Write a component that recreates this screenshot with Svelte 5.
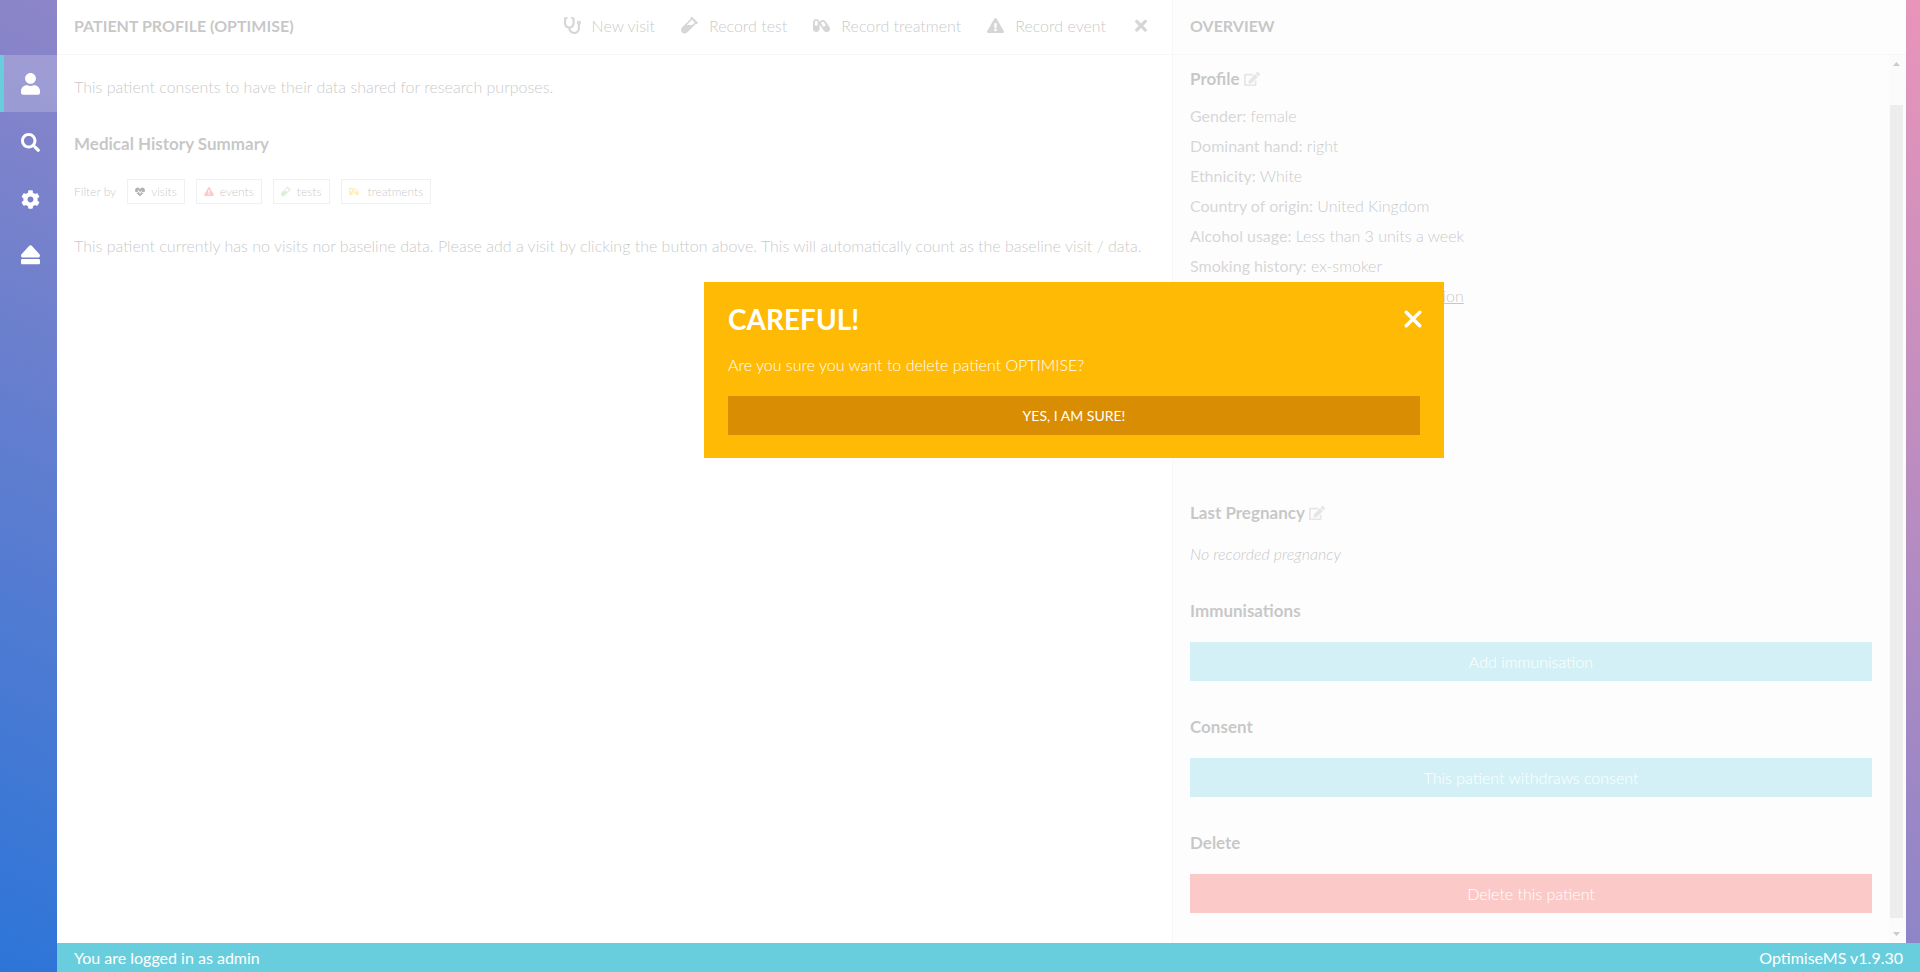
<script>
  const icons = {
    user: [448, 'M224 256c70.7 0 128-57.3 128-128S294.7 0 224 0 96 57.3 96 128s57.3 128 128 128zm89.6 32h-16.7c-22.2 10.2-46.9 16-72.9 16s-50.6-5.8-72.9-16h-16.7C60.2 288 0 348.2 0 422.4V464c0 26.5 21.5 48 48 48h352c26.5 0 48-21.5 48-48v-41.6c0-74.2-60.2-134.4-134.4-134.4z'],
    search: [512, 'M505 442.7L405.3 343c-4.5-4.5-10.6-7-17-7H372c27.6-35.3 44-79.7 44-128C416 93.1 322.9 0 208 0S0 93.1 0 208s93.1 208 208 208c48.3 0 92.7-16.4 128-44v16.3c0 6.4 2.5 12.5 7 17l99.7 99.7c9.4 9.4 24.6 9.4 33.9 0l28.3-28.3c9.4-9.4 9.4-24.6.1-34zM208 336c-70.7 0-128-57.2-128-128 0-70.7 57.2-128 128-128 70.7 0 128 57.2 128 128 0 70.7-57.2 128-128 128z'],
    cog: [512, 'M487.4 315.7l-42.6-24.6c4.3-23.2 4.3-47 0-70.2l42.6-24.6c4.9-2.8 7.1-8.6 5.5-14-11.1-35.6-30-67.8-54.7-94.6-3.8-4.1-10-5.1-14.8-2.3L380.8 110c-17.9-15.4-38.5-27.3-60.8-35.1V25.8c0-5.6-3.9-10.5-9.4-11.7-36.7-8.2-74.3-7.8-109.2 0-5.5 1.2-9.4 6.1-9.4 11.7V75c-22.2 7.9-42.8 19.8-60.8 35.1L88.7 85.5c-4.9-2.8-11-1.9-14.8 2.3-24.7 26.7-43.6 58.9-54.7 94.6-1.7 5.4.6 11.2 5.5 14L67.3 221c-4.3 23.2-4.3 47 0 70.2l-42.6 24.6c-4.9 2.8-7.1 8.6-5.5 14 11.1 35.6 30 67.8 54.7 94.6 3.8 4.1 10 5.1 14.8 2.3l42.6-24.6c17.9 15.4 38.5 27.3 60.8 35.1v49.2c0 5.6 3.9 10.5 9.4 11.7 36.7 8.2 74.3 7.8 109.2 0 5.5-1.2 9.4-6.1 9.4-11.7v-49.2c22.2-7.9 42.8-19.8 60.8-35.1l42.6 24.6c4.9 2.8 11 1.9 14.8-2.3 24.7-26.7 43.6-58.9 54.7-94.6 1.5-5.5-.7-11.3-5.6-14.1zM256 336c-44.1 0-80-35.9-80-80s35.9-80 80-80 80 35.9 80 80-35.9 80-80 80z'],
    eject: [448, 'M448 384v64c0 17.673-14.327 32-32 32H32c-17.673 0-32-14.327-32-32v-64c0-17.673 14.327-32 32-32h384c17.673 0 32 14.327 32 32zM48.053 320h351.886c41.651 0 63.581-49.674 35.383-80.435L259.383 47.558c-19.014-20.743-51.751-20.744-70.767 0L12.67 239.565C-15.475 270.268 6.324 320 48.053 320z'],
    stethoscope: [512, 'M447.1 112c-34.2.5-62.3 28.4-63 62.6-.5 24.3 12.5 45.6 32 56.8V344c0 57.3-50.2 104-112 104-60 0-109.2-44.1-111.9-99.2C265 333.8 320 269.2 320 192V36.6c0-11.4-8.1-21.3-19.3-23.5L237.8.5c-13-2.6-25.6 5.8-28.2 18.8L206.4 35c-2.6 13 5.8 25.6 18.8 28.2l30.7 6.1v121.4c0 52.9-42.2 96.7-95.1 97.2-53.4.5-96.9-42.7-96.9-96V69.4l30.7-6.1c13-2.6 21.4-15.2 18.8-28.2l-3.1-15.7C107.7 6.4 95.1-2 82.1.6L19.3 13C8.1 15.3 0 25.1 0 36.6V192c0 77.3 55.1 142 128.1 156.8C130.7 439.2 208.6 512 304 512c97 0 176-75.4 176-168V231.4c19.1-11.1 32-31.7 32-55.4 0-35.7-29.2-64.5-64.9-64zm.9 80c-8.8 0-16-7.2-16-16s7.2-16 16-16 16 7.2 16 16-7.2 16-16 16z'],
    vial: [480, 'M477.7 186.1L309.5 18.3c-3.1-3.1-8.2-3.1-11.3 0l-34 33.9c-3.1 3.1-3.1 8.2 0 11.3l11.2 11.1L33 316.5c-38.8 38.7-45.1 102-9.4 143.5 20.6 24 49.5 36 78.4 35.9 26.4 0 52.8-10 72.9-30.1l246.3-245.7 11.2 11.1c3.1 3.1 8.2 3.1 11.3 0l34-33.9c3.1-3 3.1-8.1 0-11.2zM318 256H161l148-147.7 78.5 78.3L318 256z'],
    capsules: [576, 'M555.3 300.1L424.2 112.8C401.9 81 366.4 64 330.4 64c-22.6 0-45.5 6.7-65.5 20.7-19.7 13.8-33.7 32.8-41.5 53.8C220.5 79.2 172 32 112 32 50.1 32 0 82.1 0 144v224c0 61.9 50.1 112 112 112s112-50.1 112-112V218.9c3.3 8.6 7.3 17.1 12.8 25L368 431.2c22.2 31.8 57.7 48.8 93.8 48.8 22.7 0 45.5-6.7 65.5-20.7 51.7-36.2 64.2-107.5 28-159.2zM160 256H64V144c0-26.5 21.5-48 48-48s48 21.5 48 48v112zm194.8 44.9l-65.6-93.7c-7.7-11-10.7-24.4-8.3-37.6 2.3-13.2 9.7-24.8 20.7-32.5 8.5-6 18.5-9.1 28.8-9.1 16.5 0 31.9 8 41.3 21.5l65.6 93.7-82.5 57.7z'],
    warning: [576, 'M569.517 440.013C587.975 472.007 564.806 512 527.94 512H48.054c-36.937 0-59.999-40.055-41.577-71.987L246.423 23.985c18.467-32.009 64.72-31.951 83.154 0l239.94 416.028zM288 354c-25.405 0-46 20.595-46 46s20.595 46 46 46 46-20.595 46-46-20.595-46-46-46zm-43.673-165.346l7.418 136c.347 6.364 5.609 11.346 11.982 11.346h48.546c6.373 0 11.635-4.982 11.982-11.346l7.418-136c.375-6.874-5.098-12.654-11.982-12.654h-63.383c-6.884 0-12.356 5.78-11.981 12.654z'],
    times: [352, 'M242.72 256l100.07-100.07c12.28-12.28 12.28-32.19 0-44.48l-22.24-22.24c-12.28-12.28-32.19-12.28-44.48 0L176 189.28 75.93 89.21c-12.28-12.28-32.19-12.28-44.48 0L9.21 111.45c-12.28 12.28-12.28 32.19 0 44.48L109.28 256 9.21 356.07c-12.28 12.28-12.28 32.19 0 44.48l22.24 22.24c12.28 12.28 32.2 12.28 44.48 0L176 322.72l100.07 100.07c12.28 12.28 32.2 12.28 44.48 0l22.24-22.24c12.28-12.28 12.28-32.19 0-44.48L242.72 256z'],
    heart: [512, 'M320.2 243.8l-49.7 99.4c-6 12.1-23.4 11.7-28.9-.6l-56.9-126.3-30 71.7H60.6l182.5 186.5c7.1 7.3 18.6 7.3 25.7 0L451.4 288H342.3l-22.1-44.2zM473.7 73.9l-2.4-2.5c-51.5-52.6-135.8-52.6-187.4 0L256 100l-27.9-28.5c-51.5-52.7-135.9-52.7-187.4 0l-2.4 2.4C-10.4 123.7-12.5 203 31 256h102.4l35.9-86.2c5.4-12.9 23.6-13.1 29.4-.4l58.2 129.3 49-97.9c5.9-11.8 22.7-11.8 28.6 0l27.6 55.2H481c43.5-53 41.4-132.3-7.3-182.1z'],
    edit: [576, 'M402.6 83.2l90.2 90.2c3.8 3.8 3.8 10 0 13.8L274.4 405.6l-92.8 10.3c-12.4 1.4-22.9-9.1-21.5-21.5l10.3-92.8L388.8 83.2c3.8-3.8 10-3.8 13.8 0zm162-22.9l-48.8-48.8c-15.2-15.2-39.9-15.2-55.2 0l-35.4 35.4c-3.8 3.8-3.8 10 0 13.8l90.2 90.2c3.8 3.8 10 3.8 13.8 0l35.4-35.4c15.2-15.3 15.2-40 0-55.2zM384 346.2V448H64V128h229.8c3.2 0 6.2-1.3 8.5-3.5l40-40c7.6-7.6 2.2-20.5-8.5-20.5H48C21.5 64 0 85.5 0 112v352c0 26.5 21.5 48 48 48h352c26.5 0 48-21.5 48-48V306.2c0-10.7-12.9-16-20.5-8.5l-40 40c-2.2 2.3-3.5 5.3-3.5 8.5z']
  };

  const menu = [
    { icon: 'user', label: 'Patient', active: true },
    { icon: 'search', label: 'Search' },
    { icon: 'cog', label: 'Settings' },
    { icon: 'eject', label: 'Log out' }
  ];
  const actions = [
    { icon: 'stethoscope', label: 'New visit' },
    { icon: 'vial', label: 'Record test' },
    { icon: 'capsules', label: 'Record treatment' },
    { icon: 'warning', label: 'Record event' }
  ];
  const filters = [
    { icon: 'heart', label: 'visits' },
    { icon: 'warning', label: 'events' },
    { icon: 'vial', label: 'tests' },
    { icon: 'capsules', label: 'treatments' }
  ];
  const profile = [
    ['Gender', 'female'],
    ['Dominant hand', 'right'],
    ['Ethnicity', 'White'],
    ['Country of origin', 'United Kingdom'],
    ['Alcohol usage', 'Less than 3 units a week'],
    ['Smoking history', 'ex-smoker']
  ];
</script>

{#snippet icon(name)}
  <svg class="icon {name}" viewBox="0 0 {icons[name][0]} 512" aria-hidden="true"><path d={icons[name][1]} /></svg>
{/snippet}

<div class="app">
  <nav class="menu">
    {#each menu as item}
      <a href="#{item.icon}" class:active={item.active} aria-label={item.label}>{@render icon(item.icon)}</a>
    {/each}
  </nav>

  <div class="panels">
    <main class="patient">
      <header class="bar">
        <h2>PATIENT PROFILE (OPTIMISE)</h2>
        <div class="actions">
          {#each actions as a}
            <button type="button">{@render icon(a.icon)}<span>{a.label}</span></button>
          {/each}
          <button type="button" aria-label="Close patient">{@render icon('times')}</button>
        </div>
      </header>
      <div class="history">
        <p>This patient consents to have their data shared for research purposes.</p>
        <h3>Medical History Summary</h3>
        <div class="filters">
          <span>Filter by</span>
          {#each filters as f}
            <button type="button" class={f.label}>{@render icon(f.icon)}<span>{f.label}</span></button>
          {/each}
        </div>
        <p>This patient currently has no visits nor baseline data. Please add a visit by clicking the button above. This will automatically count as the baseline visit / data.</p>
      </div>
    </main>

    <aside class="overview">
      <header class="bar"><h2>OVERVIEW</h2></header>
      <div class="scroller">
        <div class="details">
          <h3>Profile <button type="button" class="edit" aria-label="Edit profile">{@render icon('edit')}</button></h3>
          <ul>
            {#each profile as [name, value]}
              <li><b>{name}:</b> {value}</li>
            {/each}
            <li><a href="#information">Show all identifiable patient information</a></li>
          </ul>
          <section class="pregnancy">
            <h3>Last Pregnancy <button type="button" class="edit" aria-label="Edit last pregnancy">{@render icon('edit')}</button></h3>
            <p><i>No recorded pregnancy</i></p>
          </section>
          <h3 class="immunisations">Immunisations</h3>
          <button type="button" class="wide">Add immunisation</button>
          <h3 class="next">Consent</h3>
          <button type="button" class="wide">This patient withdraws consent</button>
          <h3 class="next">Delete</h3>
          <button type="button" class="wide danger">Delete this patient</button>
        </div>
        <div class="track" aria-hidden="true">
          <svg viewBox="0 0 7 4"><path d="M0 4L3.5 0 7 4z" /></svg>
          <div class="thumb"></div>
          <svg viewBox="0 0 7 4"><path d="M0 0L3.5 4 7 0z" /></svg>
        </div>
      </div>
    </aside>
    <div class="veil"></div>
  </div>

  <footer>
    <span>You are logged in as admin</span>
    <span>OptimiseMS v1.9.30</span>
  </footer>

  <div class="dialog" role="alertdialog" aria-labelledby="dialog-title" aria-describedby="dialog-text">
    <div class="dialog-head">
      <h1 id="dialog-title">CAREFUL!</h1>
      <button type="button" class="dismiss" aria-label="Dismiss">
        <svg viewBox="0 0 16 16" aria-hidden="true"><path d="M2 2l12 12M14 2L2 14" /></svg>
      </button>
    </div>
    <p id="dialog-text">Are you sure you want to delete patient OPTIMISE?</p>
    <button type="button" class="confirm">YES, I AM SURE!</button>
  </div>
</div>

<style>
  :global(body) {
    margin: 0;
    font-family: 'Century Gothic', Lato, sans-serif;
    font-size: 16px;
    font-weight: 300;
    color: #444;
  }
  * { box-sizing: border-box; }
  h1, h2, h3, p, ul { margin: 0; padding: 0; }
  ul { list-style: none; }
  button {
    font: inherit;
    color: inherit;
    background: none;
    border: 0;
    padding: 0;
    cursor: pointer;
  }
  .icon { fill: currentColor; display: block; }

  .app {
    position: relative;
    min-height: 100vh;
    display: grid;
    grid-template: 1fr 29px / 57px 1fr;
    background: linear-gradient(to top right, #2c75d8, #ea94b9);
  }
  .menu { grid-row: 1 / 3; padding-top: 55px; color: #fff; }
  .menu a {
    display: flex;
    align-items: flex-end;
    height: 57px;
    padding: 0 0 17px 17px;
    border-left: 4px solid transparent;
    color: #fff;
  }
  .menu a.active { background: rgba(255, 255, 255, .2) padding-box; border-color: #68cedd; }
  .menu .icon { width: 19px; }

  .panels {
    position: relative;
    display: grid;
    grid-template-columns: 1115fr 734fr;
    margin-right: 14px;
  }
  .veil { position: absolute; inset: 0; background: rgba(255, 255, 255, .7); }
  .patient { background: #fff; }
  .overview {
    display: flex;
    flex-direction: column;
    background: #f8f8f8;
    border-left: 1px solid #e3e3e3;
  }
  .bar {
    display: flex;
    align-items: center;
    justify-content: space-between;
    height: 55px;
    padding: 0 25px 3px 17px;
    border-bottom: 1px solid #e3e3e3;
  }
  h2, h3 { font-size: 17px; line-height: 24px; color: #454545; }
  h2 { font-size: 16px; }
  .actions { display: flex; align-items: center; gap: 26px; }
  .actions button { display: flex; align-items: center; gap: 11px; }
  .actions button:last-child { padding-left: 3px; }
  .actions .icon { width: 17px; color: #777; }
  .actions .times { width: 12px; }

  .history { padding: 17px 8px 17px 17px; }
  .history p { line-height: 30px; }
  .history h3 { margin: 30px 0 23px; }
  .filters {
    display: flex;
    align-items: center;
    gap: 11px;
    margin-bottom: 27px;
    font-size: 12px;
  }
  .filters button {
    display: flex;
    align-items: center;
    gap: 6px;
    height: 25px;
    padding: 0 7px;
    border: 1px solid #ccc;
  }
  .filters .treatments { gap: 9px; }
  .filters .icon { width: 10px; }
  .visits .icon { color: #000; }
  .events .icon { color: #ff4a4a; }
  .tests .icon { color: #8fca80; }
  .treatments .icon { color: #ffc61a; }

  .scroller { flex: 1; display: flex; }
  .details { flex: 1; padding: 12px 17px 30px; }
  .details li, .details p { line-height: 30px; }
  .details ul { margin-top: 10px; }
  .details b { color: #777; }
  .details a { color: inherit; }
  .edit .icon { width: 16px; color: #aaa; display: inline-block; vertical-align: -1px; }
  .pregnancy { margin: 190px 0 30px; }
  .pregnancy p { margin-top: 14px; }
  .next { margin-top: 34px; }
  .wide {
    display: block;
    width: 100%;
    height: 39px;
    margin-top: 19px;
    background: #68cedd;
    color: #fff;
  }
  .danger { background: #f54b4b; }
  .track {
    display: flex;
    flex-direction: column;
    align-items: center;
    width: 17px;
    padding: 7px 3px 7px 1px;
    background: #f1f1f1;
  }
  .track svg { width: 7px; height: 4px; fill: #505050; }
  .thumb { flex: 1; width: 13px; margin: 39px 0 14px; background: #c1c1c1; }

  footer {
    display: flex;
    align-items: center;
    justify-content: space-between;
    padding: 0 17px;
    background: #68cedd;
    color: #fff;
    font-weight: 400;
  }

  .dialog {
    position: absolute;
    top: 282px;
    left: 704px;
    width: 740px;
    padding: 17px 24px 23px;
    background: #ffba05;
    color: #fff;
  }
  .dialog-head { display: flex; align-items: center; justify-content: space-between; margin-right: -2px; }
  .dialog h1 { font-size: 28px; line-height: 40px; }
  .dialog p { margin: 11px 0 16px; line-height: 30px; }
  .dismiss { display: flex; }
  .dismiss svg { width: 18px; height: 18px; stroke: #fff; stroke-width: 3; stroke-linecap: round; }
  .confirm { display: block; width: 100%; height: 39px; background: #d98d03; font-size: 14px; font-weight: 400; }
</style>
